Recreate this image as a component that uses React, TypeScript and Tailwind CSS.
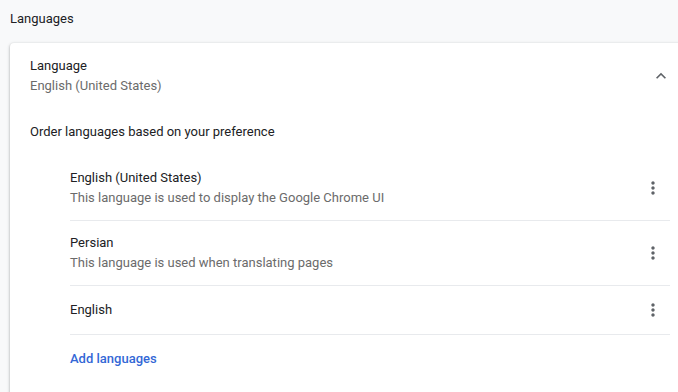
import React from 'react';

const languages = [
  { name: 'English (United States)', note: 'This language is used to display the Google Chrome UI' },
  { name: 'Persian', note: 'This language is used when translating pages' },
  { name: 'English', note: '' },
];

function MoreIcon() {
  return (
    <svg viewBox="0 0 24 24" className="h-5 w-5 fill-[#5f6368]">
      <path d="M12 8c1.1 0 2-.9 2-2s-.9-2-2-2-2 .9-2 2 .9 2 2 2zm0 2c-1.1 0-2 .9-2 2s.9 2 2 2 2-.9 2-2-.9-2-2-2zm0 6c-1.1 0-2 .9-2 2s.9 2 2 2 2-.9 2-2-.9-2-2-2z" />
    </svg>
  );
}

function ChevronUp() {
  return (
    <svg viewBox="0 0 24 24" className="h-5 w-5 fill-[#5f6368]">
      <path d="M12 8l-6 6 1.41 1.41L12 10.83l4.59 4.58L18 14z" />
    </svg>
  );
}

export default function App() {
  return (
    <div
      className="h-[392px] w-[678px] overflow-hidden bg-[#f8f9fa] text-[13px] leading-[20px] text-[#333333]"
      style={{ fontFamily: 'Roboto, "Liberation Sans", sans-serif' }}
    >
      <div className="flex h-[43px] items-center pl-[10px] pb-[6px] text-[#202124]">Languages</div>

      <div className="ml-[10px] w-[690px] rounded-[4px] bg-white pb-[40px] shadow-[0_1px_2px_rgba(60,64,67,0.3),0_1px_3px_1px_rgba(60,64,67,0.15)]">
        {/* Language header */}
        <div className="flex h-[65px] items-center pl-[20px] pr-[29px] pt-[1px]">
          <div className="flex-1">
            <div className="text-[#202124]">Language</div>
            <div className="text-[#6b6b6b]">English (United States)</div>
          </div>
          <ChevronUp />
        </div>

        <div className="flex h-[48px] items-center pl-[20px] text-[#202124]">
          Order languages based on your preference
        </div>

        <div className="pl-[60px] pr-[30px]">
          {languages.map((lang) => (
            <div
              key={lang.name}
              className={`flex items-center border-b border-[#e8eaed] ${lang.note ? 'h-[65px]' : 'h-[49px]'}`}
            >
              <div className="flex-1">
                <div className="text-[#202124]">{lang.name}</div>
                {lang.note && <div className="text-[#6b6b6b]">{lang.note}</div>}
              </div>
              <div className="-mr-[1px] flex h-[36px] w-[36px] items-center justify-center">
                <MoreIcon />
              </div>
            </div>
          ))}
          <div className="flex h-[48px] items-center font-medium text-[#3367d6]">Add languages</div>
        </div>
      </div>
    </div>
  );
}
